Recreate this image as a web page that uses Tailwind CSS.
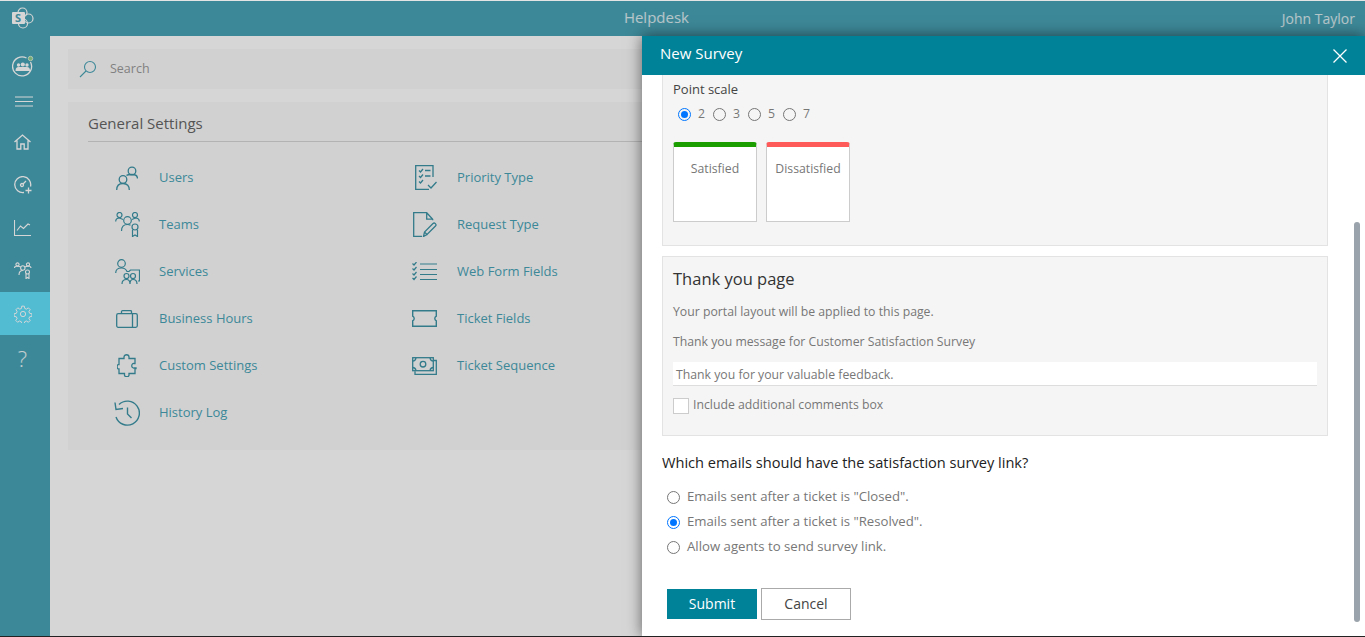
<!DOCTYPE html>
<html>
<head>
  <script src="https://cdn.jsdelivr.net/npm/@tailwindcss/browser@4"></script>
</head>
<body class="bg-white">
  <div class="relative w-[1365px] h-[637px] overflow-hidden border-t border-t-[#e4e4e4] border-b border-b-[#222] font-['Open_Sans',sans-serif] text-[13px]">

    <!-- top bar -->
    <div class="h-[35px] bg-[#49a3b6] flex items-center justify-between text-white/80">
      <div class="w-[50px] pl-[12px] pb-[2px]">
        <svg width="22" height="22" viewBox="0 0 22 22" fill="none" stroke="#fff" stroke-width="1.200"><circle cx="10.500" cy="5.500" r="4.500"/><circle cx="16.500" cy="11.500" r="4.500"/><circle cx="11" cy="16.500" r="4.500"/><rect x="0" y="5" width="13" height="12" rx="1" fill="#fff" stroke="none"/><text x="3" y="15" font-size="11" font-weight="700" fill="#49a3b6" stroke="none" font-family="Open Sans">S</text></svg>
      </div>
      <div class="text-[15px] ml-[-19px] pb-[2px]">Helpdesk</div>
      <div class="text-[14px] pr-[10px] pb-[1px]">John Taylor</div>
    </div>

    <div class="flex h-[600px]">
      <!-- sidebar -->
      <div class="w-[50px] bg-[#49a3b6] flex flex-col shrink-0">
        <div class="h-[60px] w-[45px] flex items-center justify-center">
          <svg width="22" height="22" viewBox="0 0 22 22" fill="none" stroke="#fff" stroke-width="1.300"><path d="M18.500 7a9.500 9.500 0 1 1-4-4"/><g fill="#fff" stroke="none"><circle cx="6.500" cy="10" r="1.700"/><circle cx="15" cy="10" r="1.700"/><circle cx="10.800" cy="9.500" r="2.100"/><path d="M3.500 16c0-3 1-4 3-4h8.500c2 0 3 1 3 4z"/></g><circle cx="18.500" cy="3.500" r="2.200" fill="#8fd08a" stroke="#d5ecd5" stroke-width="1"/></svg>
        </div>
        <div class="h-[11px] w-[47px] flex justify-center">
          <svg width="18" height="11" viewBox="0 0 18 11" stroke="#fff" stroke-width="1"><path d="M0 1h18M0 5.500h18M0 10h18"/></svg>
        </div>
        <div class="h-[43px] w-[45px] mt-[13px] flex items-center justify-center">
          <svg width="17" height="16" viewBox="0 0 17 16" fill="none" stroke="#fff" stroke-width="1.300"><path d="M.5 8l8-7 8 7M3 6.500V15h3.800v-5h3.400v5H14V6.500"/></svg>
        </div>
        <div class="h-[43px] w-[45px] flex items-center justify-center">
          <svg width="18" height="18" viewBox="0 0 18 18" fill="none" stroke="#fff" stroke-width="1.300"><path d="M10 16.500a8 8 0 1 1 6.500-6"/><circle cx="8" cy="9" r="1.500"/><path d="M9 8l3-3M14.500 11.500v6M11.500 14.500h6"/></svg>
        </div>
        <div class="h-[43px] w-[45px] flex items-center justify-center">
          <svg width="17" height="16" viewBox="0 0 17 16" fill="none" stroke="#fff" stroke-width="1.100"><path d="M.5 0v15.500h16.500M3 10.500l3.500-4.500 3 2.500 4.500-4.500 2 1"/></svg>
        </div>
        <div class="h-[43px] w-[45px] flex items-center justify-center">
          <svg width="18" height="17" viewBox="0 0 18 17" fill="none" stroke="#fff" stroke-width="1.100"><circle cx="3.500" cy="2.500" r="1.600"/><circle cx="14" cy="2.500" r="1.600"/><circle cx="8.800" cy="6" r="2.200"/><path d="M.5 6c0-1.500 1-2 3-2l3.300 1M17 6c0-1.500-1-2-3-2l-3.300 1M5 13c0-3 1.500-4.500 3.800-4.500"/><circle cx="13.500" cy="10" r="2"/><path d="M12 12v4.500l1.500-1 1.500 1V12"/></svg>
        </div>
        <div class="h-[43px] w-full pr-[5px] bg-[#62e0fc] flex items-center justify-center">
          <svg width="18" height="18" viewBox="0 0 24 24" fill="none" stroke="#fff" stroke-width="1.300"><circle cx="12" cy="12" r="3.500"/><path d="M10.300 1.500h3.400l.6 3 2.300 1 2.600-1.700 2.400 2.400-1.700 2.600 1 2.300 3 .6v3.400l-3 .6-1 2.300 1.700 2.600-2.400 2.400-2.600-1.700-2.300 1-.6 3h-3.400l-.6-3-2.300-1-2.600 1.700-2.400-2.400 1.700-2.600-1-2.300-3-.6v-3.400l3-.6 1-2.300L2.700 6.200l2.400-2.400 2.600 1.700 2.300-1z"/></svg>
        </div>
        <div class="h-[46px] w-[45px] flex items-center justify-center text-white/90 text-[22px] font-light">?</div>
      </div>

      <!-- main content -->
      <div class="flex-1 bg-white pl-[18px] pr-[18px] pt-[13px]">
        <div class="h-[40px] bg-[#fafafa] flex items-center pl-[11px] gap-[13px] text-[12.500px] text-[#999]">
          <svg width="18" height="18" viewBox="0 0 18 18" fill="none" stroke="#49a3b6" stroke-width="1.100"><circle cx="11" cy="7" r="5.500"/><path d="M7 11L1 17"/></svg>
          <span class="pt-[1px]">Search</span>
        </div>
        <div class="mt-[13px] h-[348px] bg-[#fafafa] px-[20px]">
          <div class="h-[40px] border-b border-[#d6d6d6] flex items-center text-[15px] text-[#666] pt-[4px]">General Settings</div>
          <div class="grid grid-flow-col grid-rows-[repeat(6,47px)] grid-cols-[298px_298px] pt-[12px] text-[#49a3b6]">
            <!-- first column -->
            <div class="flex items-center">
              <div class="w-[71px] pl-[28px]"><svg class="block" width="22" height="24" viewBox="0 0 22 24" fill="none" stroke="#3d93a6" stroke-width="1.300"><circle cx="16" cy="5" r="3.800"/><circle cx="7" cy="13.500" r="3.800"/><path d="M.7 24c0-4 2-6.500 6.300-6.500S13.300 20 13.300 24M10.500 9.500c1-1 3-1 5.500-1 3.500 0 5.500 1.500 5.500 4"/></svg></div>
              <span>Users</span>
            </div>
            <div class="flex items-center">
              <div class="w-[71px] pl-[27px]"><svg class="block" width="25" height="25" viewBox="0 0 25 25" fill="none" stroke="#3d93a6" stroke-width="1.200"><circle cx="4.500" cy="3" r="2.500"/><circle cx="20" cy="3" r="2.500"/><circle cx="12.500" cy="8.500" r="3.800"/><path d="M.7 9.500c0-2.500 1.500-3.500 3.800-3.500l3.500 1.500M24.300 9.500c0-2.500-1.500-3.500-4-3.500L17 7.500M6.500 19c0-4 2-6.500 6-6.500 1 0 2 .2 3 .6"/><circle cx="20" cy="15" r="3"/><path d="M17.500 18v6.500l2.500-1.500 2.500 1.500V18"/></svg></div>
              <span>Teams</span>
            </div>
            <div class="flex items-center">
              <div class="w-[71px] pl-[27px]"><svg class="block" width="25" height="25" viewBox="0 0 25 25" fill="none" stroke="#3d93a6" stroke-width="1.200"><circle cx="6.500" cy="4.500" r="3.800"/><path d="M.7 14c0-3 2-5 5.800-5 2.500 0 4.500 1 5.500 3.500h2l1.500-1.500H24.500v11H23"/><circle cx="11.500" cy="17" r="2.500"/><circle cx="18" cy="17" r="2.500"/><path d="M7 25c0-3 2-4.500 4.500-4.500S15 22 15 25M15 25c0-3 1-4.500 3-4.500s4 1.500 4 4.500"/></svg></div>
              <span>Services</span>
            </div>
            <div class="flex items-center">
              <div class="w-[71px] pl-[28px]"><svg class="block" width="22" height="18" viewBox="0 0 22 18" fill="none" stroke="#3d93a6" stroke-width="1.300"><rect x=".7" y="3.700" width="20.600" height="13.600" rx="1.500"/><path d="M5.500 3.700V1.500C5.500 1 6 .7 6.500.7h8c.5 0 1 .3 1 .8v2.200M16.500 3.700v13.600"/></svg></div>
              <span>Business Hours</span>
            </div>
            <div class="flex items-center">
              <div class="w-[71px] pl-[29px]"><svg class="block" width="20" height="23" viewBox="0 0 20 23" fill="none" stroke="#3d93a6" stroke-width="1.300"><path d="M7 4.500V3c0-3 5-3 5 0v1.500h6v5h-1c-3-.5-3 5 0 4.500h2v.5h-1v5h-6v1c.5 3-5 3-4.500 0v-1H2V15c-2.500.5-2.500-5 0-4.500V4.500z"/></svg></div>
              <span>Custom Settings</span>
            </div>
            <div class="flex items-center">
              <div class="w-[71px] pl-[26px]"><svg class="block" width="26" height="26" viewBox="0 0 26 26" fill="none" stroke="#3d93a6" stroke-width="1.400"><path d="M5 4.500A12 12 0 1 1 2 17"/><path d="M1 2.500l1 7 7-1"/><path d="M13.500 7.500v6.500l4 4"/></svg></div>
              <span>History Log</span>
            </div>
            <!-- second column -->
            <div class="flex items-center">
              <div class="w-[71px] pl-[29px]"><svg class="block" width="22" height="25" viewBox="0 0 22 25" fill="none" stroke="#3d93a6" stroke-width="1.300"><path d="M18 12V.7H.7v23.600H14"/><path d="M4 5.500l1.500 1.500L8 4M4 11l1.500 1.500L8 9.500M4 16.500l1.500 1.500L8 15M10 5.500h5.500M10 11h5.500"/><path d="M13 20l3 3 5.500-6"/></svg></div>
              <span>Priority Type</span>
            </div>
            <div class="flex items-center">
              <div class="w-[71px] pl-[27px]"><svg class="block" width="24" height="25" viewBox="0 0 24 25" fill="none" stroke="#3d93a6" stroke-width="1.300"><path d="M9 24.300H.7V.7h13l6 6.500v1M13.700.7v6.500h6"/><path d="M10.500 24.500l1-4.500 8.500-8.500c1.500-1.500 4 1 2.500 2.500l-8.500 8.500zM11.500 20l3 3"/></svg></div>
              <span>Request Type</span>
            </div>
            <div class="flex items-center">
              <div class="w-[71px] pl-[26px]"><svg class="block" width="25" height="19" viewBox="0 0 25 19" fill="none" stroke="#3d93a6" stroke-width="1.200"><path d="M.5 1.500l1.500 1.500L4.500 0M.5 6.500l1.500 1.500 2.500-3M.5 11.500l1.500 1.500 2.500-3M.5 16l1.500 1.500 2.500-3M8 2h17M8 7.500h17M8 12.500h17M8 17.500h17"/></svg></div>
              <span>Web Form Fields</span>
            </div>
            <div class="flex items-center">
              <div class="w-[71px] pl-[26px]"><svg class="block" width="25" height="17" viewBox="0 0 25 17" fill="none" stroke="#3d93a6" stroke-width="1.400"><path d="M.7.7h23.600v5.500c-2 1-2 3.600 0 4.600v5.500H.7v-5.500c2-1 2-3.600 0-4.600z"/></svg></div>
              <span>Ticket Fields</span>
            </div>
            <div class="flex items-center">
              <div class="w-[71px] pl-[26px]"><svg class="block" width="25" height="18" viewBox="0 0 25 18" fill="none" stroke="#3d93a6" stroke-width="1.300"><rect x=".7" y=".7" width="20.600" height="13" /><path d="M22 3.500h2.300v13.800H3v-3"/><circle cx="11" cy="7.200" r="2.800"/><path d="M.7 4c2 0 3-1 3.300-3.300M21.300 4c-2 0-3-1-3.300-3.300M.7 10.500c2 0 3 1 3.300 3.200M21.300 10.500c-2 0-3 1-3.300 3.200"/></svg></div>
              <span>Ticket Sequence</span>
            </div>
          </div>
        </div>
      </div>
    </div>

    <!-- dimming overlay -->
    <div class="absolute inset-0 bg-black/16"></div>

    <!-- slide-in panel -->
    <div class="absolute left-[642px] top-[35px] bottom-0 right-0 bg-white flex flex-col shadow-[0_0_14px_rgba(0,0,0,0.55)]">
      <div class="h-[39px] shrink-0 bg-[#008299] flex items-center justify-between pl-[18px] pr-[18px] text-white text-[15px]">
        <span class="pb-[4px]">New Survey</span>
        <svg width="14" height="14" viewBox="0 0 14 14" stroke="#fff" stroke-width="1.300"><path d="M.5.5l13 13M13.500.5l-13 13"/></svg>
      </div>
      <div class="flex-1 relative overflow-hidden pl-[20px] pr-[37px] text-[12.250px] text-[#777]">
        <div class="absolute right-[5px] top-[147px] w-[6px] h-[400px] bg-[#9aa3ab] rounded-full"></div>

        <div class="h-[171px] bg-[#f5f5f5] border border-t-0 border-[#e3e3e3] pl-[10px] pt-[5px]">
          <div class="text-[13px] text-[#444]">Point scale</div>
          <div class="flex items-center h-[20px] mt-[5px] pl-[5px]">
            <span class="w-[13px] h-[13px] rounded-full border border-[#0075ff] flex items-center justify-center"><span class="w-[7px] h-[7px] rounded-full bg-[#0075ff]"></span></span>
            <span class="ml-[7px] w-[15px]">2</span>
            <span class="w-[13px] h-[13px] rounded-full border border-[#767676]"></span>
            <span class="ml-[7px] w-[15px]">3</span>
            <span class="w-[13px] h-[13px] rounded-full border border-[#767676]"></span>
            <span class="ml-[7px] w-[15px]">5</span>
            <span class="w-[13px] h-[13px] rounded-full border border-[#767676]"></span>
            <span class="ml-[7px]">7</span>
          </div>
          <div class="flex gap-[9px] mt-[17px]">
            <div class="w-[84px] h-[80px] bg-white border border-[#ccc] border-t-[5px] border-t-[#1a9e00] rounded-t-[3px] text-center pt-[13px]">Satisfied</div>
            <div class="w-[84px] h-[80px] bg-white border border-[#ccc] border-t-[5px] border-t-[#ff5a5a] rounded-t-[3px] text-center pt-[13px]">Dissatisfied</div>
          </div>
        </div>

        <div class="h-[180px] mt-[10px] bg-[#f5f5f5] border border-[#e3e3e3] px-[10px] pt-[10px]">
          <div class="text-[16.500px] font-medium text-[#333] leading-[24px]">Thank you page</div>
          <div class="mt-[12px] leading-[18px]">Your portal layout will be applied to this page.</div>
          <div class="mt-[12px] leading-[18px]">Thank you message for Customer Satisfaction Survey</div>
          <div class="mt-[11px] h-[24px] bg-white border-b border-[#ddd] pl-[3px] leading-[25px]">Thank you for your valuable feedback.</div>
          <div class="flex items-start mt-[12px]">
            <span class="w-[16px] h-[16px] bg-white border border-[#ccc]"></span>
            <span class="ml-[4px] leading-[14px]">Include additional comments box</span>
          </div>
        </div>

        <div class="mt-[17px] text-[14.600px] font-medium text-[#222] leading-[18px]">Which emails should have the satisfaction survey link?</div>
        <div class="mt-[14px] pl-[5px] text-[13.200px]">
          <div class="h-[25px] flex items-center gap-[7px]"><span class="w-[13px] h-[13px] rounded-full border border-[#767676]"></span><span class="mb-[2px]">Emails sent after a ticket is "Closed".</span></div>
          <div class="h-[25px] flex items-center gap-[7px]"><span class="w-[13px] h-[13px] rounded-full border border-[#0075ff] flex items-center justify-center"><span class="w-[7px] h-[7px] rounded-full bg-[#0075ff]"></span></span><span class="mb-[2px]">Emails sent after a ticket is "Resolved".</span></div>
          <div class="h-[25px] flex items-center gap-[7px]"><span class="w-[13px] h-[13px] rounded-full border border-[#767676]"></span><span class="mb-[2px]">Allow agents to send survey link.</span></div>
        </div>
        <div class="flex items-center gap-[4px] mt-[28px] pl-[5px]">
          <button class="w-[90px] h-[30px] bg-[#008299] text-white text-[14px] font-medium pb-[2px]">Submit</button>
          <button class="w-[90px] h-[32px] bg-white border border-[#aaa] text-[#444] text-[14px] pb-[2px]">Cancel</button>
        </div>
      </div>
    </div>
  </div>
</body>
</html>
